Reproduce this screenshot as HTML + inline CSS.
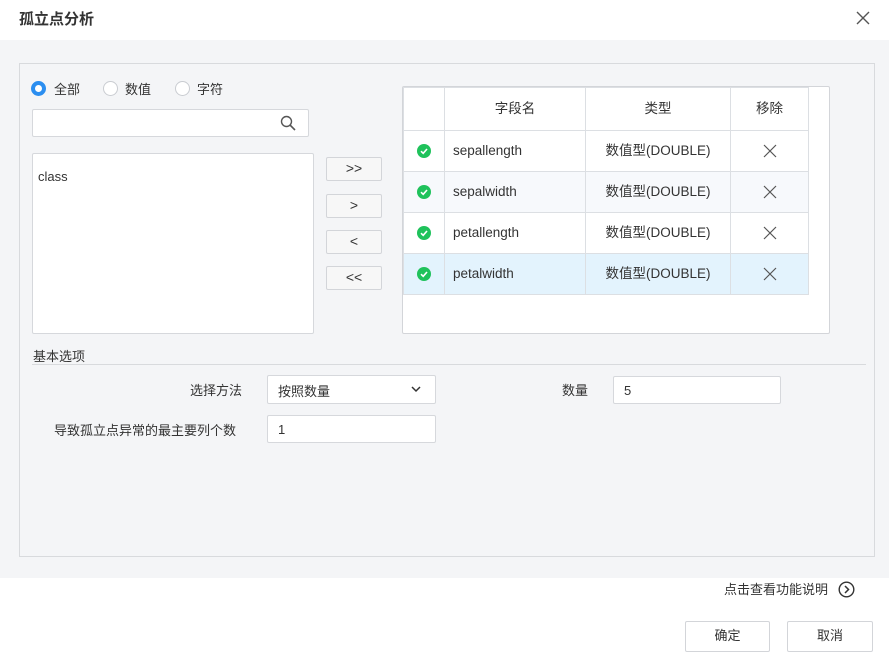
<!DOCTYPE html>
<html><head><meta charset="utf-8"><style>
*{box-sizing:border-box;margin:0;padding:0}
body{width:891px;height:664px;background:#fff;font-family:"Liberation Sans","Noto Sans CJK SC",sans-serif;font-size:13px;color:#333;position:relative;overflow:hidden}
.a{position:absolute}
.inp{position:absolute;background:#fff;border:1px solid #d6d8dc;border-radius:2px}
.btn{position:absolute;background:#f7f7f7;border:1px solid #d3d5d9;border-radius:2px;text-align:center;font-size:14px;line-height:21px;color:#333}
table{border-collapse:collapse;position:absolute;left:403px;top:87px}
td{border:1px solid #dcdfe3;height:41px;text-align:center;font-size:13.5px;line-height:16px}
.rad{position:absolute;width:15px;height:15px;border-radius:50%;border:1px solid #c9ccd1;background:#fff}
.chk{display:inline-block;width:14px;height:14px;border-radius:50%;background:#1fc25b;position:relative;vertical-align:middle}
.x{vertical-align:middle}
</style></head><body>
<div class="a" style="left:19px;top:8px;font-size:15px;font-weight:bold;color:#333">孤立点分析</div>
<svg class="a" style="left:856px;top:11px" width="14" height="14"><path d="M1 1L13 13M13 1L1 13" stroke="#555" stroke-width="1.4"/></svg>
<div class="a" style="left:0;top:40px;width:889px;height:538px;background:#f4f5f7"></div>
<div class="a" style="left:19px;top:63px;width:856px;height:494px;border:1px solid #d8dadd;background:#f4f5f7"></div>
<div class="rad" style="left:31px;top:81px;border:4px solid #2b8ef0"></div>
<div class="a" style="left:54px;top:79px">全部</div>
<div class="rad" style="left:103px;top:81px"></div>
<div class="a" style="left:125px;top:79px">数值</div>
<div class="rad" style="left:175px;top:81px"></div>
<div class="a" style="left:197px;top:79px">字符</div>
<div class="inp" style="left:32px;top:109px;width:277px;height:28px"></div>
<svg class="a" style="left:280px;top:115px" width="16" height="16"><circle cx="6.5" cy="6.5" r="5" fill="none" stroke="#555" stroke-width="1.4"/><path d="M10 10L15 15" stroke="#555" stroke-width="1.6"/></svg>
<div class="inp" style="left:32px;top:153px;width:282px;height:181px"></div>
<div class="a" style="left:38px;top:169px">class</div>
<div class="btn" style="left:326px;top:157px;width:56px;height:24px">&gt;&gt;</div>
<div class="btn" style="left:326px;top:194px;width:56px;height:24px">&gt;</div>
<div class="btn" style="left:326px;top:230px;width:56px;height:24px">&lt;</div>
<div class="btn" style="left:326px;top:266px;width:56px;height:24px">&lt;&lt;</div>
<div class="inp" style="left:402px;top:86px;width:428px;height:248px;border-color:#d3d5d9"></div>
<table>
<tr style="background:#fff"><td style="width:41px;height:43px"></td><td style="width:141px">字段名</td><td style="width:145px">类型</td><td style="width:78px">移除</td></tr>
<tr style="background:#fff"><td><span class="chk"><svg width="14" height="14"><path d="M4 7.2L6.2 9.3L10 5" stroke="#fff" stroke-width="1.6" fill="none"/></svg></span></td><td style="text-align:left;padding-left:8px">sepallength</td><td>数值型(DOUBLE)</td><td><svg class="x" width="14" height="14"><path d="M1 1L13 13M13 1L1 13" stroke="#555" stroke-width="1.2"/></svg></td></tr>
<tr style="background:#f7f9fc"><td><span class="chk"><svg width="14" height="14"><path d="M4 7.2L6.2 9.3L10 5" stroke="#fff" stroke-width="1.6" fill="none"/></svg></span></td><td style="text-align:left;padding-left:8px">sepalwidth</td><td>数值型(DOUBLE)</td><td><svg class="x" width="14" height="14"><path d="M1 1L13 13M13 1L1 13" stroke="#555" stroke-width="1.2"/></svg></td></tr>
<tr style="background:#fff"><td><span class="chk"><svg width="14" height="14"><path d="M4 7.2L6.2 9.3L10 5" stroke="#fff" stroke-width="1.6" fill="none"/></svg></span></td><td style="text-align:left;padding-left:8px">petallength</td><td>数值型(DOUBLE)</td><td><svg class="x" width="14" height="14"><path d="M1 1L13 13M13 1L1 13" stroke="#555" stroke-width="1.2"/></svg></td></tr>
<tr style="background:#e3f3fd"><td><span class="chk"><svg width="14" height="14"><path d="M4 7.2L6.2 9.3L10 5" stroke="#fff" stroke-width="1.6" fill="none"/></svg></span></td><td style="text-align:left;padding-left:8px">petalwidth</td><td>数值型(DOUBLE)</td><td><svg class="x" width="14" height="14"><path d="M1 1L13 13M13 1L1 13" stroke="#555" stroke-width="1.2"/></svg></td></tr>
</table>
<div class="a" style="left:33px;top:346px">基本选项</div>
<div class="a" style="left:32px;top:364px;width:834px;height:1px;background:#d8dadd"></div>
<div class="a" style="left:190px;top:380px">选择方法</div>
<div class="inp" style="left:267px;top:375px;width:169px;height:29px;padding:5px 10px">按照数量</div>
<svg class="a" style="left:411px;top:386px" width="10" height="7"><path d="M1 1L5 5L9 1" stroke="#333" stroke-width="1.5" fill="none"/></svg>
<div class="a" style="left:562px;top:380px">数量</div>
<div class="inp" style="left:613px;top:376px;width:168px;height:28px;padding:6px 10px">5</div>
<div class="a" style="left:54px;top:420px">导致孤立点异常的最主要列个数</div>
<div class="inp" style="left:267px;top:415px;width:169px;height:28px;padding:6px 10px">1</div>
<div class="a" style="left:724px;top:579px">点击查看功能说明</div>
<svg class="a" style="left:838px;top:581px" width="17" height="17"><circle cx="8.5" cy="8.5" r="7.3" fill="none" stroke="#333" stroke-width="1.4"/><path d="M7 5L10.5 8.5L7 12" stroke="#333" stroke-width="1.5" fill="none"/></svg>
<div class="btn" style="left:685px;top:621px;width:85px;height:31px;line-height:28px;background:#fff;font-size:13px">确定</div>
<div class="btn" style="left:787px;top:621px;width:86px;height:31px;line-height:28px;background:#fff;font-size:13px">取消</div>
</body></html>
